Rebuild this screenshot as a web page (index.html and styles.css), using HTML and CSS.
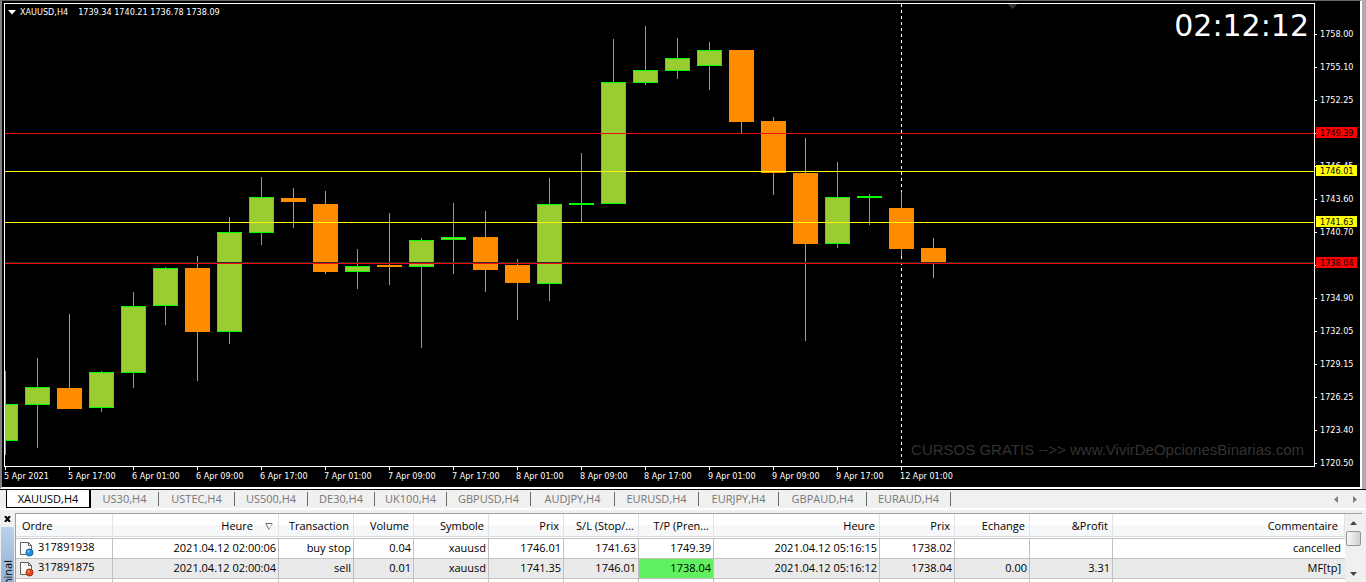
FILE: index.html
```html
<!DOCTYPE html>
<html lang="fr">
<head>
<meta charset="utf-8">
<title>XAUUSD,H4</title>
<link rel="stylesheet" href="styles.css">
</head>
<body>
<main class="chart-window">
  <div class="chart">
    <section class="plot">
      <svg class="plot-canvas" aria-label="XAUUSD H4">
        <g transform="translate(-5 -4)" shape-rendering="crispEdges">
          <path class="period" d="M901.5 4V466"/>
          <path class="marker" d="M1007 4h10l-5 5z"/>
          <g id="candles"></g>
        </g>
        <g shape-rendering="crispEdges">
          <rect class="stop" y="129" width="100%" height="1"/>
          <rect class="order" y="167" width="100%" height="1"/>
          <rect class="order" y="218" width="100%" height="1"/>
          <rect class="bid" y="258" width="100%" height="1"/>
          <rect class="stop" y="259" width="100%" height="1"/>
        </g>
      </svg>
      <h1 class="quote"><svg width="8" height="5"><path d="M0 0h8L4 4.500z"/></svg><span>XAUUSD,H4</span><span>1739.34 1740.21 1736.78 1738.09</span></h1>
      <div class="clock">02:12:12</div>
      <div class="watermark">CURSOS GRATIS --&gt;&gt; www.VivirDeOpcionesBinarias.com</div>
    </section>
    <aside class="prices">
      <ol class="scale">
        <li>1758.00</li><li>1755.10</li><li>1752.25</li><li>1749.35</li><li>1746.45</li><li>1743.60</li><li>1740.70</li><li>1737.80</li><li>1734.90</li><li>1732.05</li><li>1729.15</li><li>1726.25</li><li>1723.40</li><li>1720.50</li>
      </ol>
      <span class="tag red" style="top:124px">1749.39</span>
      <span class="tag yellow" style="top:162px">1746.01</span>
      <span class="tag yellow" style="top:213px">1741.63</span>
      <span class="tag red" style="top:254px">1738.04</span>
    </aside>
    <ol class="times">
      <li>5 Apr 2021</li><li>5 Apr 17:00</li><li>6 Apr 01:00</li><li>6 Apr 09:00</li><li>6 Apr 17:00</li><li>7 Apr 01:00</li><li>7 Apr 09:00</li><li>7 Apr 17:00</li><li>8 Apr 01:00</li><li>8 Apr 09:00</li><li>8 Apr 17:00</li><li>9 Apr 01:00</li><li>9 Apr 09:00</li><li>9 Apr 17:00</li><li>12 Apr 01:00</li>
    </ol>
  </div>
</main>
<nav class="tabbar">
  <div class="tabs">
    <button class="tab active">XAUUSD,H4</button><button class="tab">US30,H4</button><button class="tab">USTEC,H4</button><button class="tab">US500,H4</button><button class="tab">DE30,H4</button><button class="tab">UK100,H4</button><button class="tab">GBPUSD,H4</button><button class="tab">AUDJPY,H4</button><button class="tab">EURUSD,H4</button><button class="tab">EURJPY,H4</button><button class="tab">GBPAUD,H4</button><button class="tab">EURAUD,H4</button>
  </div>
  <div class="tab-scroll">
    <button aria-label="Précédent"><svg width="4" height="7"><path d="M4 0v7L0 3.500z"/></svg></button>
    <button aria-label="Suivant"><svg width="4" height="7"><path d="M0 0v7l4-3.500z"/></svg></button>
  </div>
</nav>
<section class="terminal">
  <div class="dock">
    <button class="close" aria-label="Fermer"><svg width="7" height="6"><path d="M1 0l5 6M6 0L1 6"/></svg></button>
    <div class="dock-title"><span>Terminal</span></div>
  </div>
  <div class="table-area">
    <table class="orders">
      <colgroup><col class="w97"><col class="w166"><col class="w75"><col class="w60"><col class="w75"><col class="w75"><col class="w75"><col class="w75"><col class="w166"><col class="w75"><col class="w75"><col class="w83"><col></colgroup>
      <thead>
        <tr><th class="left">Ordre</th><th>Heure<svg class="sort" width="8" height="7"><path d="M.5.500h7M1 1l3 5.500"/><path class="light" d="M7 1L4 6.500"/></svg></th><th>Transaction</th><th>Volume</th><th>Symbole</th><th>Prix</th><th>S/L (Stop/...</th><th>T/P (Pren...</th><th>Heure</th><th>Prix</th><th>Echange</th><th>&amp;Profit</th><th>Commentaire</th></tr>
      </thead>
      <tbody>
        <tr><td class="left"><svg class="doc" width="15" height="16"><path class="paper" d="M1.500 1.500h8l3 3v9h-11z"/><path class="fold" d="M9.500 1.500v3h3"/><circle cx="10.500" cy="11.500" r="3.500" fill="#1b93de" stroke="#0b62a8"/><circle cx="9.500" cy="10.500" r="1" fill="#a9dcfa"/></svg>317891938</td><td>2021.04.12 02:00:06</td><td>buy stop</td><td>0.04</td><td>xauusd</td><td>1746.01</td><td>1741.63</td><td>1749.39</td><td>2021.04.12 05:16:15</td><td>1738.02</td><td></td><td></td><td>cancelled</td></tr>
        <tr><td class="left"><svg class="doc" width="15" height="16"><path class="paper" d="M1.500 1.500h8l3 3v9h-11z"/><path class="fold" d="M9.500 1.500v3h3"/><circle cx="10.500" cy="11.500" r="3.500" fill="#e2461c" stroke="#a92b0a"/><circle cx="9.500" cy="10.500" r="1" fill="#fbb79c"/></svg>317891875</td><td>2021.04.12 02:00:04</td><td>sell</td><td>0.01</td><td>xauusd</td><td>1741.35</td><td>1746.01</td><td class="hit">1738.04</td><td>2021.04.12 05:16:12</td><td>1738.04</td><td>0.00</td><td>3.31</td><td>MF[tp]</td></tr>
        <tr><td class="left"><svg class="doc" width="15" height="16"><path class="paper" d="M1.500 1.500h8l3 3v9h-11z"/></svg></td><td></td><td></td><td></td><td></td><td></td><td></td><td></td><td></td><td></td><td></td><td></td><td></td></tr>
      </tbody>
    </table>
  </div>
  <div class="scrollbar">
    <button aria-label="Haut"><svg width="7" height="4"><path d="M0 4h7L3.500 0z"/></svg></button>
    <div class="thumb"></div>
    <button class="down" aria-label="Bas"><svg width="7" height="4"><path d="M0 0h7L3.500 4z"/></svg></button>
  </div>
</section>
<script src="chart.js"></script>
</body>
</html>
```
FILE: chart.js
```js
// [direction, wick top, wick bottom, body top, body bottom]
const candles = [
  ["up",371,455,404,441],["up",358,448,387,405],["down",314,409,388,409],["up",371,412,372,408],
  ["up",292,388,306,373],["up",267,325,268,306],["down",256,381,268,332],["up",217,344,232,332],
  ["up",177,245,197,233],["down",188,228,198,202],["down",191,274,204,272],["up",249,289,266,272],
  ["down",213,285,265,267],["up",238,348,240,267],["up",203,274,237,240],["down",211,292,237,270],
  ["down",259,320,265,283],["up",178,301,204,284],["up",153,222,203,205],["up",39,204,82,204],
  ["up",26,85,70,83],["up",38,79,58,71],["up",42,90,50,66],["down",50,133,50,122],
  ["down",117,195,121,173],["down",138,341,173,244],["up",162,248,197,244],["up",194,225,196,198],
  ["down",192,256,208,249],["down",238,278,248,263]
];
const STEP = 32;
const HALF = 12;
const layer = document.getElementById("candles");

function addRect(name, x, y, width, height) {
  const rect = document.createElementNS("http://www.w3.org/2000/svg", "rect");
  rect.setAttribute("class", name);
  rect.setAttribute("x", x);
  rect.setAttribute("y", y);
  rect.setAttribute("width", width);
  rect.setAttribute("height", height);
  layer.appendChild(rect);
}

candles.forEach(([kind, high, low, top, bottom], i) => {
  const x = 5 + i * STEP;
  addRect("edge-" + kind, x, high, 1, low - high);
  addRect("edge-" + kind, x - HALF, top, HALF * 2 + 1, bottom - top);
  if (kind === "up" && bottom - top > 2) {
    addRect("fill-up", x - HALF + 1, top + 1, HALF * 2 - 1, bottom - top - 2);
  }
});
```
FILE: styles.css
```css
* { box-sizing: border-box; }
body {
  margin: 0;
  height: 100vh;
  display: flex;
  flex-direction: column;
  overflow: hidden;
  background: #f0f0f0;
  color: #000;
  font-family: "Open Sans", "Noto Sans", sans-serif;
  font-size: 11px;
}
button { border: 0; padding: 0; margin: 0; background: none; font: inherit; color: inherit; }
ol { list-style: none; margin: 0; padding: 0; }

.chart-window {
  flex: 1;
  min-height: 0;
  padding-right: 4px;
  background: #adadad;
  border-bottom: 1px solid #000;
}
.chart {
  height: 100%;
  display: grid;
  grid-template-columns: minmax(0, 1fr) 45px;
  grid-template-rows: minmax(0, 1fr) 20px;
  padding: 2px 0 0 2px;
  background: #000;
  color: #fff;
  border-top: 1px solid #696969;
  border-left: 2px solid #808080;
  border-right: 2px solid #fff;
  border-bottom: 2px solid #fff;
  font-family: "DejaVu Sans Condensed", "DejaVu Sans", sans-serif;
  font-stretch: condensed;
  font-size: 9px;
}
.plot { position: relative; border: 1px solid #fff; overflow: hidden; }
.plot-canvas { display: block; width: 100%; height: 100%; }
.period { stroke: #fff; stroke-dasharray: 3 3; }
.marker { fill: #333; }
.edge-up { fill: #0f0; }
.edge-down { fill: #ff8c00; }
.fill-up { fill: #9acd32; }
.stop { fill: #f00a0a; }
.order { fill: #ff0; }
.bid { fill: #2c2c2e; }
.quote {
  position: absolute;
  top: 2px;
  left: 3px;
  display: flex;
  align-items: center;
  gap: 4px;
  margin: 0;
  font-size: 9px;
  font-weight: 400;
  line-height: 12px;
}
.quote svg { fill: #fff; }
.quote span + span { padding-left: 6px; }
.clock {
  position: absolute;
  top: 4px;
  right: 5px;
  font-family: "DejaVu Sans", sans-serif;
  font-stretch: normal;
  font-size: 30px;
  line-height: 36px;
}
.watermark {
  position: absolute;
  right: 10px;
  bottom: 6px;
  color: #333;
  font-family: "Liberation Sans", sans-serif;
  font-size: 15px;
  line-height: 20px;
}
.prices { position: relative; }
.scale { padding-top: 15px; line-height: 13px; }
.scale li { display: flex; align-items: center; gap: 3px; height: 33px; }
.scale li::before { content: ""; width: 2px; height: 1px; background: #fff; }
.tag {
  position: absolute;
  left: 1px;
  width: 41px;
  height: 11px;
  padding-left: 4px;
  line-height: 12px;
  color: #000;
}
.red { background: #f00; }
.yellow { background: #ff0; }
.times { grid-column: 1 / -1; display: flex; }
.times li { flex: none; width: 64px; line-height: 12px; white-space: nowrap; }
.times li::before { content: ""; display: block; width: 1px; height: 3px; margin-left: 1px; background: #fff; }

.tabbar {
  flex: none;
  display: flex;
  justify-content: space-between;
  height: 20px;
  padding-left: 6px;
  border-bottom: 2px solid #fff;
}
.tabs {
  display: grid;
  grid-template-columns: 85px 68px 76px 73px 67px 72px 84px 84px 84px 80px 88px 84px;
  align-items: center;
}
.tab { height: 14px; line-height: 14px; border-right: 1px solid #696969; color: #767676; white-space: nowrap; }
.tab.active { height: 18px; border: 1px solid #000; border-top: 0; border-right-width: 2px; background: #fff; color: #000; }
.tab-scroll { display: flex; align-items: center; gap: 15px; padding-right: 9px; }
.tab-scroll button { display: flex; }
.tab-scroll svg { fill: #808080; }

.terminal { flex: none; display: flex; height: 72px; padding: 3px 4px 0 0; overflow: hidden; }
.dock { width: 15px; display: flex; flex-direction: column; }
.close { display: flex; align-items: center; justify-content: center; height: 14px; padding-bottom: 3px; }
.close svg { fill: none; stroke: #000; stroke-width: 2; }
.dock-title { flex: 1; min-height: 0; margin: 0 1px; background: linear-gradient(#bbd2ec, #91b0d4); overflow: hidden; }
.dock-title span { display: block; writing-mode: vertical-rl; transform: rotate(180deg); line-height: 13px; padding-bottom: 33px; }
.table-area { flex: 1; min-width: 0; overflow: hidden; background: #fff; border-top: 1px solid #a0a0a0; border-left: 1px solid #a0a0a0; }
.orders { width: 100%; table-layout: fixed; border-collapse: separate; border-spacing: 0; }
.w60 { width: 60px; }
.w75 { width: 75px; }
.w83 { width: 83px; }
.w97 { width: 97px; }
.w166 { width: 166px; }
.orders th, .orders td { text-align: right; white-space: nowrap; overflow: hidden; font-weight: 400; }
.orders th {
  height: 25px;
  padding: 0 4px 0 0;
  line-height: 18px;
  border-right: 1px solid #e2e3e5;
  border-bottom: 1px solid #c0c0c0;
  background: linear-gradient(#fff 0 45%, #f6f7f9 45% 90%, #d9dbde 90% 94%, #fff 94%);
}
.orders th:last-child { padding-right: 6px; }
.orders td {
  height: 20px;
  padding: 0 2px 1px 0;
  line-height: 16px;
  border-right: 1px solid #c0c0c0;
  border-bottom: 1px solid #c0c0c0;
}
.orders td:last-child { padding-right: 4px; border-right: 0; }
.orders tbody tr:nth-child(2) { background: #eaeaea; }
.orders .hit { background: #60f060; }
.orders th.left { text-align: left; padding-left: 6px; }
.orders td.left { text-align: left; padding-left: 3px; }
.doc { vertical-align: middle; margin-right: 4px; }
.paper { fill: #fafafa; stroke: #606060; }
.fold { fill: none; stroke: #606060; }
.sort { margin: 0 1px 0 12px; fill: none; stroke: #666; }
.sort .light { stroke: #bbb; }
.scrollbar { width: 17px; display: flex; flex-direction: column; align-items: center; border-top: 1px solid #a0a0a0; background: #f0f0f0; }
.scrollbar button { display: flex; align-items: center; justify-content: center; height: 17px; }
.scrollbar svg { fill: #444; }
.scrollbar .down { margin-top: 19px; }
.thumb { width: 15px; height: 15px; border: 1px solid #959595; border-radius: 2px; background: linear-gradient(90deg, #f5f5f5, #e4e4e4 50%, #cfcfcf); }
```
